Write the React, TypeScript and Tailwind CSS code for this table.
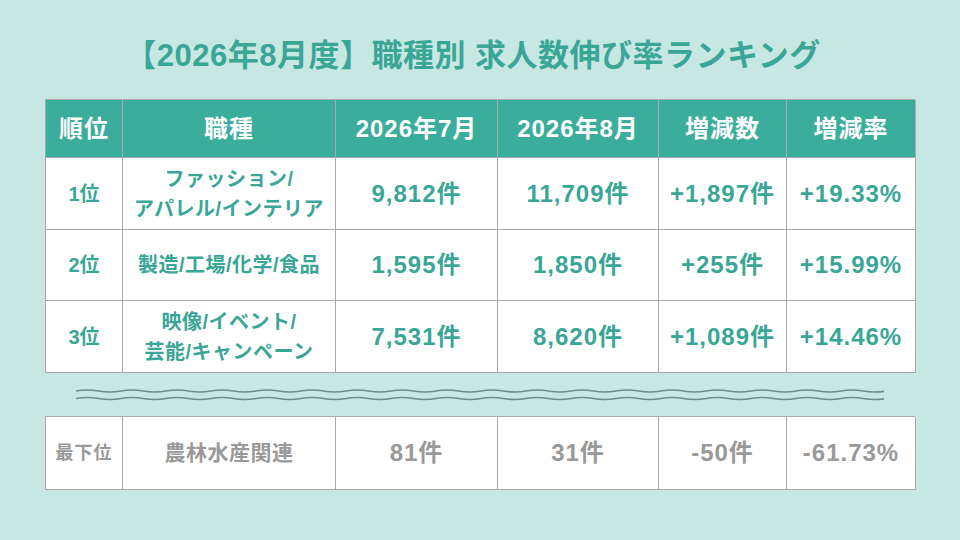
const rows = [
  { rank: '1位', job: ['ファッション/', 'アパレル/インテリア'], jul: '9,812件', aug: '11,709件', diff: '+1,897件', rate: '+19.33%' },
  { rank: '2位', job: ['製造/工場/化学/食品'], jul: '1,595件', aug: '1,850件', diff: '+255件', rate: '+15.99%' },
  { rank: '3位', job: ['映像/イベント/', '芸能/キャンペーン'], jul: '7,531件', aug: '8,620件', diff: '+1,089件', rate: '+14.46%' },
];

const heights = ['h-[72px]', 'h-[71px]', 'h-[72px]'];

const cols = 'grid grid-cols-[77px_213px_162px_161px_128px_129px]';
const cell = 'flex items-center justify-center text-center border-r border-b border-[#a9a9a9]';

function Wave() {
  // two wavy separator lines
  const w = 808;
  const period = 45;
  const make = (y: number) => {
    let d = `M0 ${y}`;
    for (let x = 0; x < w; x += period) {
      d += ` q${period / 4} -2 ${period / 2} 0 t${period / 2} 0`;
    }
    return d;
  };
  return (
    <svg width={w} height={43} viewBox={`0 0 ${w} 43`} className="block mx-auto overflow-hidden">
      <path d={make(18)} fill="none" stroke="#6e8c88" strokeWidth={1.6} />
      <path d={make(25.5)} fill="none" stroke="#6e8c88" strokeWidth={1.6} />
    </svg>
  );
}

export default function App() {
  return (
    <div className="w-[960px] h-[540px] bg-[#c7e7e2] font-['Liberation_Sans','Noto_Sans_CJK_JP',sans-serif] font-bold overflow-hidden">
      <h1 className="pt-[36px] pr-[14px] h-[99px] text-center text-[31px] leading-[40px] text-[#3aa696] tracking-[0.5px]">
        【2026年8月度】職種別 求人数伸び率ランキング
      </h1>

      <div className="w-[870px] mx-auto">
        <div className="border-l border-t border-[#a9a9a9]">
          <div className={`${cols} h-[58px] bg-[#3aad9d] text-white text-[24px] tracking-[1px]`}>
            {['順位', '職種', '2026年7月', '2026年8月', '増減数', '増減率'].map((h) => (
              <div key={h} className={cell}>{h}</div>
            ))}
          </div>
          {rows.map((r, i) => (
            <div key={r.rank} className={`${cols} ${heights[i]} bg-white text-[#3aa696]`}>
              <div className={`${cell} text-[20px]`}>{r.rank}</div>
              <div className={`${cell} flex-col text-[20px] leading-[30px] tracking-[0.5px]`}>
                {r.job.map((l) => (
                  <span key={l}>{l}</span>
                ))}
              </div>
              <div className={`${cell} text-[24px] tracking-[1px]`}>{r.jul}</div>
              <div className={`${cell} text-[24px] tracking-[1px]`}>{r.aug}</div>
              <div className={`${cell} text-[24px] tracking-[1px]`}>{r.diff}</div>
              <div className={`${cell} text-[24px] tracking-[1px]`}>{r.rate}</div>
            </div>
          ))}
        </div>

        <Wave />

        <div className="border-l border-t border-[#a9a9a9]">
          <div className={`${cols} h-[73px] bg-white text-[#999999]`}>
            <div className={`${cell} text-[18px] tracking-[1px]`}>最下位</div>
            <div className={`${cell} text-[21px] tracking-[0.5px]`}>農林水産関連</div>
            <div className={`${cell} text-[24px] tracking-[1px]`}>81件</div>
            <div className={`${cell} text-[24px] tracking-[1px]`}>31件</div>
            <div className={`${cell} text-[24px] tracking-[1px]`}>-50件</div>
            <div className={`${cell} text-[24px] tracking-[1px]`}>-61.73%</div>
          </div>
        </div>
      </div>
    </div>
  );
}
